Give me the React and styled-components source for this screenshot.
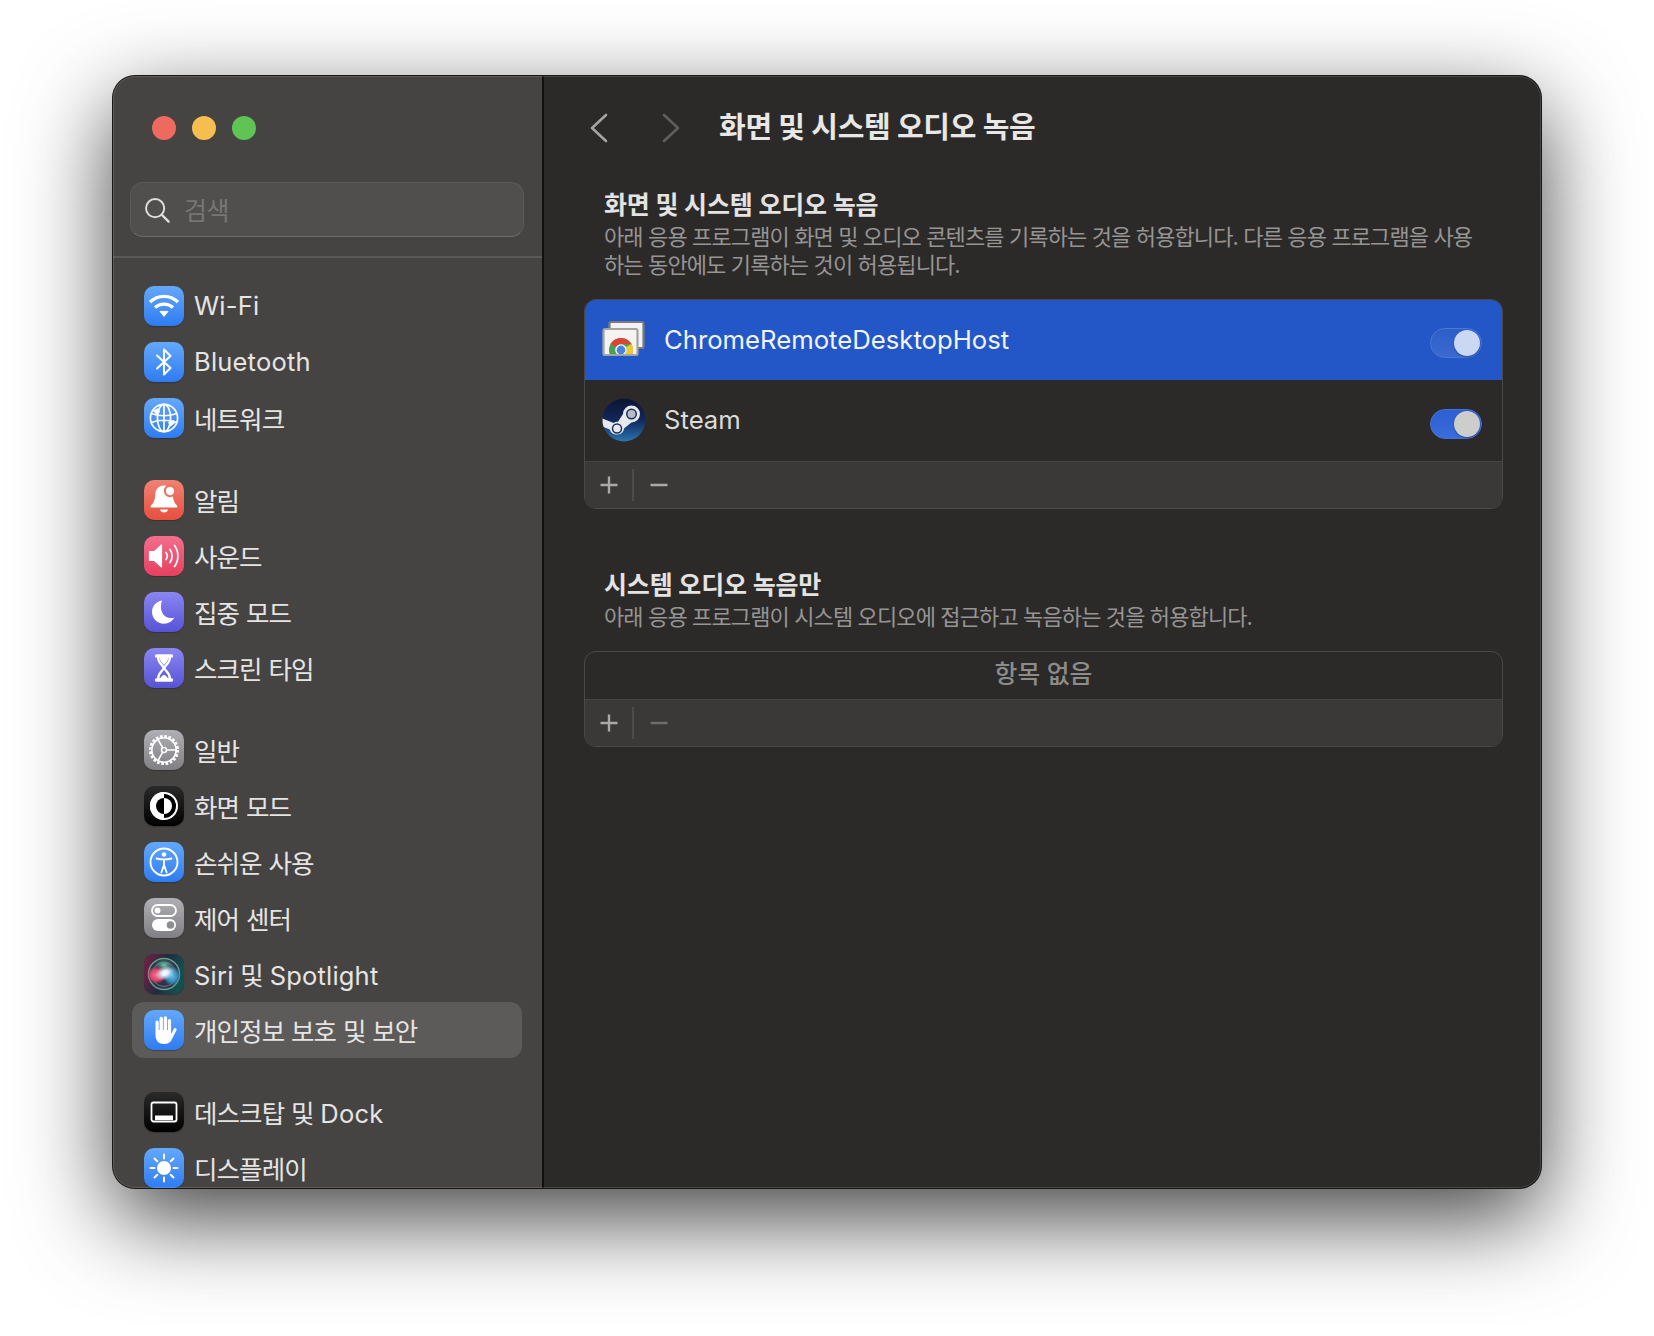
import styled, { createGlobalStyle } from 'styled-components';

const GlobalStyle = createGlobalStyle`
  html, body {
    margin: 0;
    padding: 0;
    background: #ffffff;
    font-family: "Inter", "Noto Sans CJK KR", sans-serif;
  }
  * { box-sizing: border-box; }
`;

const Page = styled.div`
  width: 1654px;
  height: 1336px;
  padding: 76px 113px 148px 113px;
  overflow: hidden;
`;

const Window = styled.div`
  position: relative;
  width: 100%;
  height: 100%;
  display: flex;
  border-radius: 22px;
  overflow: hidden;
  background: #2b2a29;
  box-shadow: 0 0 0 1px #171717, 0 30px 90px rgba(0, 0, 0, 0.75);

  &::after {
    content: '';
    position: absolute;
    inset: 0;
    border-radius: 22px;
    border: 1px solid rgba(255, 255, 255, 0.14);
    pointer-events: none;
  }
`;

const Sidebar = styled.aside`
  width: 431px;
  flex-shrink: 0;
  display: flex;
  flex-direction: column;
  background: #454443;
  border-right: 2px solid #111110;
`;

const TrafficLights = styled.div`
  display: flex;
  flex-shrink: 0;
  gap: 16px;
  padding: 40px 0 0 39px;
  height: 106px;
`;

const Light = styled.span`
  width: 24px;
  height: 24px;
  border-radius: 50%;
  background: ${({ $color }) => $color};
`;

const SearchBox = styled.div`
  height: 55px;
  flex-shrink: 0;
  margin: 0 18px 0 17px;
  padding: 0 13px;
  display: flex;
  align-items: center;
  gap: 14px;
  border-radius: 13px;
  background: #504f4e;
  border: 1px solid #5b5a59;
  border-bottom-color: #6d6c6b;
`;

const SearchHint = styled.span`
  font-size: 25px;
  letter-spacing: -0.4px;
  margin-bottom: 2px;
  color: #777675;
`;

const Divider = styled.div`
  height: 2px;
  flex-shrink: 0;
  margin-top: 19px;
  background: #5a5958;
`;

const NavList = styled.nav`
  padding: 20px 20px 0 19px;
  flex-shrink: 0;
  display: flex;
  flex-direction: column;
  gap: 26px;
`;

const NavGroup = styled.div`
  display: flex;
  flex-direction: column;
`;

const NavRow = styled.div`
  height: 56px;
  flex-shrink: 0;
  display: flex;
  align-items: center;
  gap: 10px;
  padding-left: 12px;
  border-radius: 12px;
  background: ${({ $active }) => ($active ? '#5c5b5a' : 'transparent')};
  color: #e6e5e4;
  font-size: 25.5px;
  letter-spacing: -0.9px;
  word-spacing: 0.5px;
  white-space: pre;
`;

const NavLabel = styled.span`
  margin-bottom: 2px;
`;

const Latin = styled.span`
  letter-spacing: 0.2px;
`;

const Tile = styled.span`
  width: 40px;
  height: 40px;
  flex-shrink: 0;
  border-radius: 10px;
  overflow: hidden;
  display: block;
  background: linear-gradient(${({ $from }) => $from}, ${({ $to }) => $to});
  box-shadow: 0 1px 1px rgba(0, 0, 0, 0.25);

  svg { display: block; }
`;

const Main = styled.main`
  flex: 1;
  min-width: 0;
  padding: 0 38px 0 40px;
  display: flex;
  flex-direction: column;
`;

const Header = styled.header`
  height: 112px;
  flex-shrink: 0;
  display: flex;
  align-items: center;
  padding: 0 0 9px 6px;
`;

const NavArrows = styled.div`
  display: flex;
  gap: 54px;
  margin-right: 39px;
`;

const PageTitle = styled.h1`
  margin: 0;
  font-size: 29px;
  font-weight: 700;
  color: #e8e7e6;
  letter-spacing: -0.3px;
  line-height: 48px;
`;

const Section = styled.section`
  display: flex;
  flex-direction: column;
  margin-bottom: ${({ $gap }) => $gap || 0}px;
`;

const SectionTitle = styled.h2`
  margin: 0;
  padding-left: 20px;
  font-size: 25px;
  line-height: 35px;
  font-weight: 700;
  color: #e4e3e2;
  letter-spacing: -0.15px;
`;

const SectionText = styled.p`
  margin: 0 0 ${({ $after }) => $after}px;
  padding: 0 20px;
  font-size: 22px;
  line-height: 28px;
  color: #969594;
  letter-spacing: -0.88px;
`;

const ListBox = styled.div`
  border: 1px solid #4a4948;
  border-radius: 12px;
  overflow: hidden;
`;

const AppRow = styled.div`
  height: ${({ $height }) => $height}px;
  display: flex;
  align-items: center;
  padding: 0 20px 0 17px;
  background: ${({ $selected }) => ($selected ? '#2357c7' : 'transparent')};
`;

const AppName = styled.span`
  flex: 1;
  margin: 0 0 2px 18px;
  font-size: 25.7px;
  color: ${({ $selected }) => ($selected ? '#f1f4fb' : '#dcdbda')};
`;

const AppIcon = styled.span`
  width: 44px;
  height: 44px;
  flex-shrink: 0;
  margin-bottom: 2px;
  svg { display: block; }
`;

const Toggle = styled.span`
  position: relative;
  width: 52px;
  height: 30px;
  margin-top: 6px;
  border-radius: 15px;
  background: ${({ $dim }) => ($dim ? 'linear-gradient(#2d5ec8, #3a69d0)' : 'linear-gradient(#2d5fd0, #3a6cdc)')};
  border: 1px solid ${({ $dim }) => ($dim ? '#4a78d8' : '#3f72df')};

  &::after {
    content: '';
    position: absolute;
    top: 1px;
    right: 1px;
    width: 26px;
    height: 26px;
    border-radius: 50%;
    background: ${({ $dim }) => ($dim ? '#cbd8f4' : '#cdcdcc')};
    box-shadow: 0 1px 2px rgba(0, 0, 0, 0.3);
  }
`;

const Toolbar = styled.div`
  height: 47px;
  display: flex;
  align-items: center;
  background: #3a3937;
  border-top: 1px solid #454443;
`;

const ToolButton = styled.span`
  width: ${({ $wide }) => ($wide ? 49 : 47)}px;
  display: flex;
  justify-content: center;
  color: ${({ $off }) => ($off ? '#6e6d6c' : '#aaa9a8')};
  svg { display: block; }
`;

const ToolSeparator = styled.span`
  width: 2px;
  height: 32px;
  background: #4c4b4a;
`;

const EmptyRow = styled.div`
  height: 47px;
  padding-bottom: 7px;
  display: flex;
  align-items: center;
  justify-content: center;
  font-size: 24.8px;
  font-weight: 500;
  color: #8d8c8b;
`;

const Wifi = () => (
  <svg viewBox="0 0 40 40" width="40" height="40" fill="none" stroke="#fff" strokeWidth="3.4">
    <path d="M6 16C14 8.5 26 8.5 34 16" />
    <path d="M11 21.5C16 17 24 17 29 21.5" />
    <path d="M16 25.4h8L20 30.4z" fill="#fff" stroke="#fff" strokeWidth="1" strokeLinejoin="round" />
  </svg>
);

const BluetoothGlyph = () => (
  <svg viewBox="0 0 40 40" width="40" height="40" fill="none" stroke="#fff" strokeWidth="2">
    <path d="M13 13.500 26.500 26 20 32.500V7.500L26.500 14 13 26.500" strokeLinejoin="round" strokeLinecap="round" />
  </svg>
);

const Globe = () => (
  <svg viewBox="0 0 40 40" width="40" height="40" fill="none" stroke="#fff" strokeWidth="1.700">
    <circle cx="20" cy="20" r="13.600" />
    <ellipse cx="20" cy="20" rx="6.600" ry="13.600" />
    <path d="M20 6.400v27.200M7.200 15.500c8 2.800 17.600 2.800 25.600 0M7.200 24.500c8-2.800 17.600-2.800 25.600 0" />
    <path d="M9 13l5-3 2 4-3 3zM24 24l6-2 1 3-5 4z" fill="#fff" stroke="none" />
  </svg>
);

const Bell = () => (
  <svg viewBox="0 0 40 40" width="40" height="40">
    <path d="M20 5.500c-5.800 0-8.600 4.400-8.800 9.500-.2 5-1.600 8-4.200 10.400-.9.900-.4 2.200.9 2.200h24.200c1.300 0 1.800-1.300.9-2.200-2.600-2.400-4-5.400-4.200-10.400-.2-5.100-3-9.500-8.800-9.500z" fill="#fff" />
    <path d="M16 29.500h8c-.4 2-2 3-4 3s-3.600-1-4-3z" fill="#fff" />
    <circle cx="26" cy="11" r="6.200" fill="#ee6f5f" />
    <circle cx="26" cy="11" r="4.200" fill="#fff" />
  </svg>
);

const Speaker = () => (
  <svg viewBox="0 0 40 40" width="40" height="40" fill="none" stroke="#fff" strokeWidth="1.700" strokeLinecap="round">
    <path d="M5.500 15.500h5l7-6.500v22l-7-6.500h-5z" fill="#fff" stroke="#fff" strokeWidth="1.200" strokeLinejoin="round" />
    <path d="M22 16.500c1.500 2 1.500 5 0 7M26 13.500c2.800 3.800 2.800 9.200 0 13M30.500 9.500c4.500 6 4.500 15 0 21" />
  </svg>
);

const Moon = () => (
  <svg viewBox="0 0 40 40" width="40" height="40">
    <path d="M18 8.500C11.800 9.500 8 14.500 8 20c0 6.500 5.300 11.800 12 11.800 4.400 0 8.200-2.300 10.300-6.200-1 .4-2.100.5-3.300.5-7.500 0-12.300-7.700-9-17.600z" fill="#fff" />
  </svg>
);

const Hourglass = () => (
  <svg viewBox="0 0 40 40" width="40" height="40" fill="none" stroke="#fff" strokeWidth="2.200">
    <path d="M12.500 8h15M12.500 32h15" strokeWidth="3.400" strokeLinecap="round" />
    <path d="M14 9c0 7 5.500 8 5.500 11S14 24 14 31h12c0-7-5.500-8-5.500-11S26 16 26 9z" strokeLinejoin="round" />
    <path d="M15.500 9.500h9c-.5 4-3 5.500-4.500 7.500-1.500-2-4-3.500-4.500-7.500zM16 31c.5-2 2.500-3.500 4-4.200 1.500.7 3.500 2.200 4 4.200z" fill="#fff" stroke="none" />
  </svg>
);

const Gear = () => (
  <svg viewBox="0 0 40 40" width="40" height="40" fill="none" stroke="#fff">
    <circle cx="20" cy="20" r="13.400" strokeWidth="3.400" strokeDasharray="2.600 1.600" />
    <circle cx="20" cy="20" r="12.200" strokeWidth="1.600" />
    <circle cx="20" cy="20" r="2.500" strokeWidth="1.500" />
    <path d="M20 17.500V8M22.200 21.300 30.500 26M17.800 21.300 9.500 26" strokeWidth="1.600" transform="rotate(90 20 20)" />
  </svg>
);

const Appearance = () => (
  <svg viewBox="0 0 40 40" width="40" height="40">
    <circle cx="20" cy="20" r="13" fill="#000" stroke="#fff" strokeWidth="2" />
    <path d="M20 6a14 14 0 0 0 0 28z" fill="#fff" />
    <path d="M20 12a8 8 0 0 0 0 16z" fill="#000" />
    <path d="M20 12a8 8 0 0 1 0 16z" fill="#fff" />
  </svg>
);

const Accessibility = () => (
  <svg viewBox="0 0 40 40" width="40" height="40" fill="none" stroke="#fff" strokeWidth="1.900">
    <circle cx="20" cy="20" r="13.500" />
    <circle cx="20" cy="12.500" r="2.200" fill="#fff" stroke="none" />
    <path d="M12.500 16.500c5 1.200 10 1.200 15 0M20 17.500v6M20 23l-2.600 7.500M20 23l2.600 7.500" strokeLinecap="round" />
  </svg>
);

const Switches = () => (
  <svg viewBox="0 0 40 40" width="40" height="40">
    <rect x="8" y="7" width="24" height="11" rx="5.500" fill="none" stroke="#fff" strokeWidth="1.800" />
    <circle cx="13.500" cy="12.500" r="3" fill="#fff" />
    <rect x="8" y="21" width="24" height="12" rx="6" fill="#fff" />
    <circle cx="26.500" cy="27" r="3.800" fill="#8d8d92" />
  </svg>
);

const Siri = () => (
  <svg viewBox="0 0 40 40" width="40" height="40" fill="none">
    <defs>
      <linearGradient id="siriTile" x1="0" y1="0" x2="1" y2="0.300">
        <stop offset="0%" stopColor="#7a1f45" />
        <stop offset="55%" stopColor="#232a3e" />
        <stop offset="100%" stopColor="#12504f" />
      </linearGradient>
      <radialGradient id="siriGlow">
        <stop offset="0%" stopColor="#ffffff" />
        <stop offset="35%" stopColor="#e2eefa" />
        <stop offset="100%" stopColor="#cfe4f6" stopOpacity="0" />
      </radialGradient>
      <radialGradient id="siriPink">
        <stop offset="0%" stopColor="#f8708f" />
        <stop offset="60%" stopColor="#d8466e" />
        <stop offset="100%" stopColor="#c2375f" stopOpacity="0" />
      </radialGradient>
      <radialGradient id="siriTeal">
        <stop offset="0%" stopColor="#5ec0e8" />
        <stop offset="60%" stopColor="#3a88b8" />
        <stop offset="100%" stopColor="#2d7d9e" stopOpacity="0" />
      </radialGradient>
      <radialGradient id="siriGreen">
        <stop offset="0%" stopColor="#6fd0a6" />
        <stop offset="100%" stopColor="#3f9a7e" stopOpacity="0" />
      </radialGradient>
    </defs>
    <rect width="40" height="40" fill="url(#siriTile)" />
    <circle cx="20" cy="20" r="16" fill="#34304a" />
    <circle cx="20" cy="20" r="15.500" stroke="#6fb89c" strokeWidth="1.400" opacity="0.85" />
    <circle cx="20" cy="20.500" r="12" stroke="#7fd0b8" strokeWidth="1" opacity="0.5" />
    <ellipse cx="20" cy="11" rx="10" ry="6" fill="url(#siriGreen)" />
    <ellipse cx="12.500" cy="21" rx="10" ry="9" fill="url(#siriPink)" />
    <ellipse cx="28" cy="22" rx="9" ry="10" fill="url(#siriTeal)" />
    <ellipse cx="21" cy="19" rx="10" ry="7" fill="url(#siriGlow)" transform="rotate(-22 21 19)" />
  </svg>
);

const Hand = () => (
  <svg viewBox="0 0 40 40" width="40" height="40">
    <path d="M12.500 12a1.600 1.600 0 0 1 3.200 0v8h.8V8.500a1.700 1.700 0 0 1 3.400 0V20h.8V8a1.700 1.700 0 0 1 3.400 0v12h.8V10.500a1.600 1.600 0 0 1 3.200 0V23l.5.200 1.900-4c.5-1 1.500-1.400 2.300-1 .8.400 1 1.200.6 2.300L29 29c-1.300 3.300-4 5-7.800 5-5.500 0-8.700-3.300-8.700-9z" fill="#fff" transform="translate(-1 0)" />
  </svg>
);

const Desktop = () => (
  <svg viewBox="0 0 40 40" width="40" height="40" fill="none">
    <rect x="7.500" y="10.500" width="25" height="19" rx="2" stroke="#fff" strokeWidth="1.800" />
    <rect x="11" y="23.500" width="18" height="4.500" fill="#fff" />
  </svg>
);

const Sun = () => (
  <svg viewBox="0 0 40 40" width="40" height="40" fill="none" stroke="#fff" strokeWidth="2" strokeLinecap="round">
    <circle cx="20" cy="20" r="7" fill="#fff" stroke="none" />
    <path d="M20 6.500v4M20 29.500v4M6.500 20h4M29.500 20h4M10.500 10.500l2.800 2.800M26.700 26.700l2.800 2.800M10.500 29.500l2.800-2.800M26.700 13.300l2.800-2.800" />
  </svg>
);

const ChromeRemote = () => (
  <svg viewBox="0 0 44 44" width="44" height="44">
    <defs>
      <clipPath id="chromeClip">
        <rect x="2" y="13" width="33" height="24" />
      </clipPath>
    </defs>
    <rect x="7.500" y="5" width="34" height="26" rx="1.500" fill="#f3f3f2" stroke="#7b7b7b" strokeWidth="2.200" />
    <rect x="1.500" y="12" width="34" height="26" rx="1.500" fill="#f4f3f1" stroke="#a3a3a1" strokeWidth="2.200" />
    <g clipPath="url(#chromeClip)">
      <circle cx="19" cy="33" r="12" fill="#46a24f" />
      <path d="M8.600 27a12 12 0 0 1 20.800 0H19a6 6 0 0 0-5.200 3z" fill="#dc4436" />
      <path d="M29.400 27A12 12 0 0 1 19 45l5-9a6 6 0 0 0 0-6z" fill="#f5c634" />
      <circle cx="19" cy="33" r="5.800" fill="#fff" />
      <circle cx="19" cy="33" r="4.400" fill="#4a82e4" />
    </g>
  </svg>
);

const SteamLogo = () => (
  <svg viewBox="0 0 44 44" width="44" height="44">
    <defs>
      <linearGradient id="steamFill" x1="0" y1="0" x2="0" y2="1">
        <stop offset="0%" stopColor="#0c1434" />
        <stop offset="50%" stopColor="#12275a" />
        <stop offset="100%" stopColor="#2a75b0" />
      </linearGradient>
    </defs>
    <circle cx="22" cy="22" r="21.500" fill="url(#steamFill)" />
    <path d="M.5 20.500 11.500 25a7.500 7.500 0 0 1 4.500-1.200L21 16a8.500 8.500 0 1 1 8.500 8.500l-7.300 5.800a7.500 7.500 0 0 1-14.500 1.200L1.600 29A21.500 21.500 0 0 1 .5 20.500z" fill="#e8e9ec" />
    <circle cx="29.500" cy="16" r="5.500" fill="#1b2f5e" />
    <circle cx="29.500" cy="16" r="4" fill="#b9bcc4" />
    <circle cx="15" cy="30.500" r="4.500" fill="#e8e9ec" stroke="#1b2f5e" strokeWidth="1.500" />
  </svg>
);

const SearchIcon = () => (
  <svg viewBox="0 0 28 28" width="26" height="26" fill="none" stroke="#dedddc" strokeWidth="2.100" strokeLinecap="round">
    <circle cx="12" cy="12" r="9.800" />
    <path d="M19 19l7.500 7.500" strokeWidth="2.500" />
  </svg>
);

const Chevron = ({ dir, color }) => (
  <svg viewBox="0 0 18 30" width="18" height="30" fill="none" stroke={color} strokeWidth="2.600" strokeLinecap="round" strokeLinejoin="round">
    <path d={dir === 'left' ? 'M16 2 2 15l14 13' : 'M2 2l14 13L2 28'} />
  </svg>
);

const Plus = () => (
  <svg viewBox="0 0 20 20" width="20" height="20" stroke="currentColor" strokeWidth="2.400">
    <path d="M10 1.500v17M1.500 10h17" />
  </svg>
);

const Minus = () => (
  <svg viewBox="0 0 20 20" width="20" height="20" stroke="currentColor" strokeWidth="2.400">
    <path d="M1.500 10h17" />
  </svg>
);

const blue = ['#64a8fb', '#2f7cf2'];
const grey = ['#b0b0b4', '#7f7f84'];
const indigo = ['#8a86f2', '#5753d6'];
const black = ['#2a2a2a', '#000000'];

const navGroups = [
  [
    { label: 'Wi-Fi', colors: blue, Glyph: Wifi },
    { label: 'Bluetooth', colors: blue, Glyph: BluetoothGlyph },
    { label: '네트워크', colors: blue, Glyph: Globe },
  ],
  [
    { label: '알림', colors: ['#f08273', '#e84f3e'], Glyph: Bell },
    { label: '사운드', colors: ['#f26f8c', '#e6405f'], Glyph: Speaker },
    { label: '집중 모드', colors: indigo, Glyph: Moon },
    { label: '스크린 타임', colors: indigo, Glyph: Hourglass },
  ],
  [
    { label: '일반', colors: grey, Glyph: Gear },
    { label: '화면 모드', colors: black, Glyph: Appearance },
    { label: '손쉬운 사용', colors: blue, Glyph: Accessibility },
    { label: '제어 센터', colors: grey, Glyph: Switches },
    { label: 'Siri 및 Spotlight', colors: ['#1d2a33', '#1d2a33'], Glyph: Siri },
    { label: '개인정보 보호 및 보안', colors: blue, Glyph: Hand, active: true },
  ],
  [
    { label: '데스크탑 및 Dock', colors: black, Glyph: Desktop },
    { label: '디스플레이', colors: blue, Glyph: Sun },
  ],
];

// latin runs are a bit wider in the original than the hangul spacing allows
const renderLabel = (label) =>
  label.split(/([A-Za-z-]+)/).map((part, i) => (i % 2 ? <Latin key={i}>{part}</Latin> : part));

const App = () => (
  <Page>
    <GlobalStyle />
    <Window>
      <Sidebar>
        <TrafficLights>
          <Light $color="#ee6a5f" />
          <Light $color="#f5be4f" />
          <Light $color="#5fc454" />
        </TrafficLights>
        <SearchBox>
          <SearchIcon />
          <SearchHint>검색</SearchHint>
        </SearchBox>
        <Divider />
        <NavList>
          {navGroups.map((group, i) => (
            <NavGroup key={i}>
              {group.map(({ label, colors, Glyph, active }) => (
                <NavRow key={label} $active={active}>
                  <Tile $from={colors[0]} $to={colors[1]}>
                    <Glyph />
                  </Tile>
                  <NavLabel>{renderLabel(label)}</NavLabel>
                </NavRow>
              ))}
            </NavGroup>
          ))}
        </NavList>
      </Sidebar>
      <Main>
        <Header>
          <NavArrows>
            <Chevron dir="left" color="#a5a4a3" />
            <Chevron dir="right" color="#5f5e5d" />
          </NavArrows>
          <PageTitle>화면 및 시스템 오디오 녹음</PageTitle>
        </Header>
        <Section $gap={59}>
          <SectionTitle>화면 및 시스템 오디오 녹음</SectionTitle>
          <SectionText $after={20}>
            아래 응용 프로그램이 화면 및 오디오 콘텐츠를 기록하는 것을 허용합니다. 다른 응용 프로그램을 사용하는 동안에도 기록하는 것이 허용됩니다.
          </SectionText>
          <ListBox>
            <AppRow $height={80} $selected>
              <AppIcon>
                <ChromeRemote />
              </AppIcon>
              <AppName $selected>ChromeRemoteDesktopHost</AppName>
              <Toggle $dim />
            </AppRow>
            <AppRow $height={81}>
              <AppIcon>
                <SteamLogo />
              </AppIcon>
              <AppName>Steam</AppName>
              <Toggle />
            </AppRow>
            <Toolbar>
              <ToolButton>
                <Plus />
              </ToolButton>
              <ToolSeparator />
              <ToolButton $wide>
                <Minus />
              </ToolButton>
            </Toolbar>
          </ListBox>
        </Section>
        <Section>
          <SectionTitle>시스템 오디오 녹음만</SectionTitle>
          <SectionText $after={20}>아래 응용 프로그램이 시스템 오디오에 접근하고 녹음하는 것을 허용합니다.</SectionText>
          <ListBox>
            <EmptyRow>항목 없음</EmptyRow>
            <Toolbar>
              <ToolButton>
                <Plus />
              </ToolButton>
              <ToolSeparator />
              <ToolButton $wide $off>
                <Minus />
              </ToolButton>
            </Toolbar>
          </ListBox>
        </Section>
      </Main>
    </Window>
  </Page>
);

export default App;
